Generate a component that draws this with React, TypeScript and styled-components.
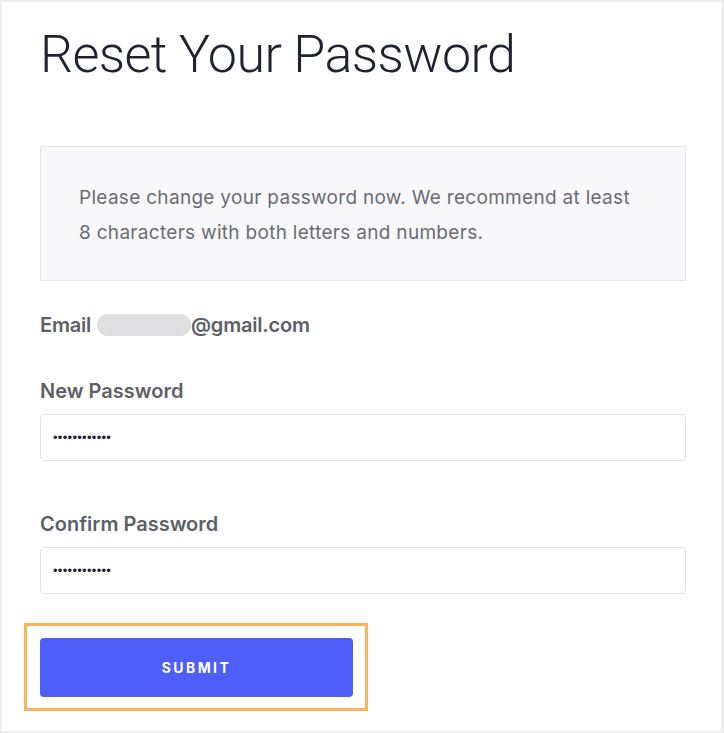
import React from 'react';
import styled, { createGlobalStyle } from 'styled-components';

const GlobalStyle = createGlobalStyle`
    html, body {
        margin: 0;
        padding: 0;
        background: #ffffff;
    }
    * {
        box-sizing: border-box;
    }
`;

export default function App() {
    return (
        <>
            <GlobalStyle />
            <Frame>
                <Title>Reset Your Password</Title>
                <Notice>
                    Please change your password now. We recommend at least<br />
                    8 characters with both letters and numbers.
                </Notice>
                <EmailRow>
                    <span>Email</span>
                    <Redacted />
                    <span>@gmail.com</span>
                </EmailRow>
                <Field $gap={42}>
                    <Label htmlFor="new-password">New Password</Label>
                    <Input id="new-password" type="password" defaultValue="password1234" />
                </Field>
                <Field $gap={51}>
                    <Label htmlFor="confirm-password">Confirm Password</Label>
                    <Input id="confirm-password" type="password" defaultValue="password1234" />
                </Field>
                {/* orange highlight round the button */}
                <Highlight>
                    <SubmitButton type="button">SUBMIT</SubmitButton>
                </Highlight>
            </Frame>
        </>
    );
}

const Frame = styled.div`
    width: 724px;
    height: 733px;
    border: 2px solid #efefef;
    border-right-width: 3px;
    background: #ffffff;
    padding: 0 36px 0 38px;
    display: flex;
    flex-direction: column;
    align-items: flex-start;
    font-family: Inter, "Liberation Sans", sans-serif;
`;

const Title = styled.h1`
    margin: 22px 0 0;
    font-family: Roboto, "Liberation Sans", sans-serif;
    font-weight: 300;
    font-size: 52px;
    line-height: 62px;
    color: #1f2330;
    letter-spacing: -0.6px;
`;

const Notice = styled.div`
    margin-top: 60px;
    width: 646px;
    padding: 33px 38px 30px;
    background: #f8f8fa;
    border: 1px solid #e4e4e7;
    font-size: 19px;
    line-height: 35px;
    letter-spacing: 0.3px;
    color: #6b6c74;
`;

const EmailRow = styled.div`
    margin-top: 32px;
    display: flex;
    align-items: center;
    font-size: 20px;
    font-weight: 600;
    line-height: 24px;
    letter-spacing: -0.2px;
    color: #5e5f67;
`;

const Redacted = styled.span`
    display: inline-block;
    width: 94px;
    height: 22px;
    margin-left: 6px;
    border-radius: 11px;
    background: #e0e0e2;
`;

const Field = styled.div<{ $gap: number }>`
    margin-top: ${({ $gap }) => $gap}px;
    width: 646px;
    display: flex;
    flex-direction: column;
    gap: 11px;
`;

const Label = styled.label`
    font-size: 20px;
    font-weight: 600;
    line-height: 24px;
    color: #5e5f67;
`;

const Input = styled.input`
    width: 100%;
    height: 47px;
    padding: 0 12px;
    border: 1px solid #e3e3e5;
    border-radius: 4px;
    background: #ffffff;
    font-family: "Liberation Sans", sans-serif;
    font-size: 13px;
    letter-spacing: 0.3px;
    color: #1f2330;
    outline: none;
`;

const Highlight = styled.div`
    margin: 29px 0 0 -16px;
    padding: 12px 12px 11px 13px;
    border: 3px solid #fbb45e;
`;

const SubmitButton = styled.button`
    display: block;
    width: 313px;
    height: 59px;
    border: none;
    border-radius: 4px;
    background: #4e5ef8;
    color: #ffffff;
    font-family: Inter, "Liberation Sans", sans-serif;
    font-size: 14px;
    font-weight: 700;
    letter-spacing: 2.4px;
    cursor: pointer;
`;
